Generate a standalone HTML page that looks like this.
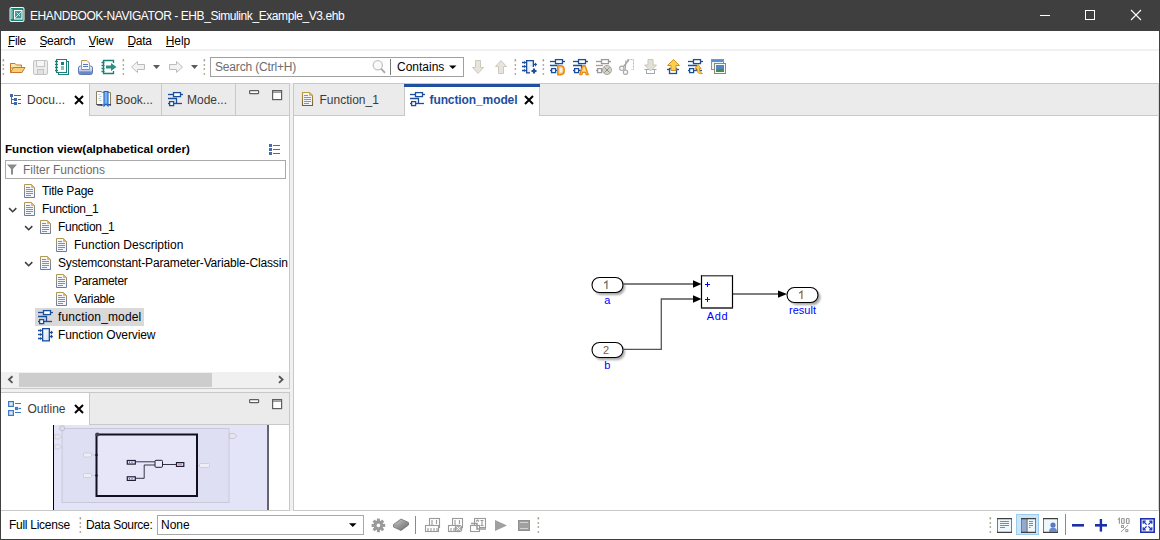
<!DOCTYPE html>
<html><head><meta charset="utf-8">
<style>
*{margin:0;padding:0;box-sizing:border-box}
html,body{width:1160px;height:540px;overflow:hidden;background:#fff}
body{position:relative;font-family:"Liberation Sans",sans-serif;font-size:12px;color:#000}
.a{position:absolute}
.t{position:absolute;white-space:nowrap;line-height:1}
svg{position:absolute;overflow:visible}
</style></head><body>

<!-- window frame -->
<div class="a" style="left:0;top:0;width:1160px;height:540px;background:#f0f0f0"></div>

<!-- title bar -->
<div class="a" style="left:0;top:0;width:1160px;height:31px;background:#3f3f3f"></div>
<div class="t" style="left:30px;top:10px;font-size:12px;color:#fff;letter-spacing:-0.42px">EHANDBOOK-NAVIGATOR - EHB_Simulink_Example_V3.ehb</div>

<!-- menu bar -->
<div class="a" style="left:1px;top:31px;width:1158px;height:18px;background:#fff"></div>
<div class="a" style="left:1px;top:49px;width:1158px;height:2px;background:#f0f0f0"></div>
<!-- toolbar -->
<div class="a" style="left:1px;top:51px;width:1158px;height:32px;background:#fff"></div>


<!-- menu texts -->
<div class="t" style="left:8px;top:35px;letter-spacing:-0.4px">File</div>
<div class="t" style="left:39.5px;top:35px;letter-spacing:-0.4px">Search</div>
<div class="t" style="left:88.5px;top:35px;letter-spacing:-0.3px">View</div>
<div class="t" style="left:127.5px;top:35px;letter-spacing:-0.3px">Data</div>
<div class="t" style="left:165.8px;top:35px;letter-spacing:-0.1px">Help</div>
<div class="a" style="left:8px;top:46px;width:6px;height:1px;background:#000"></div>
<div class="a" style="left:40px;top:46px;width:6px;height:1px;background:#000"></div>
<div class="a" style="left:89px;top:46px;width:6px;height:1px;background:#000"></div>
<div class="a" style="left:128px;top:46px;width:6px;height:1px;background:#000"></div>
<div class="a" style="left:166px;top:46px;width:8px;height:1px;background:#000"></div>

<!-- search box -->
<div class="a" style="left:210px;top:57px;width:254px;height:20px;border:1px solid #a0a0a0;background:#fff"></div>
<div class="t" style="left:215px;top:60.5px;color:#6d6d6d;letter-spacing:-0.17px">Search (Ctrl+H)</div>
<div class="a" style="left:390px;top:59px;width:1px;height:16px;background:#7a7a7a"></div>
<div class="t" style="left:397px;top:60.5px;color:#000">Contains</div>

<!-- ===== left top panel ===== -->
<div class="a" style="left:1px;top:83px;width:289px;height:306px;background:#fff;border:1px solid #c8c8c8;border-left:none"></div>
<div class="a" style="left:1px;top:84px;width:288px;height:32px;background:#ebebeb;border-bottom:1px solid #c8c8c8"></div>
<div class="a" style="left:1px;top:84px;width:89px;height:32px;background:#fff;border-right:1px solid #c8c8c8"></div>
<div class="a" style="left:161px;top:84px;width:1px;height:31px;background:#c8c8c8"></div>
<div class="a" style="left:235px;top:84px;width:1px;height:31px;background:#c8c8c8"></div>
<div class="t" style="left:27px;top:93.6px;font-size:12px;color:#3a3a3a">Docu...</div>
<div class="t" style="left:115.5px;top:93.6px;font-size:12px;color:#3a3a3a">Book...</div>
<div class="t" style="left:187px;top:93.6px;font-size:12px;color:#3a3a3a">Mode...</div>

<div class="t" style="left:5px;top:143px;font-weight:bold;font-size:11.6px">Function view(alphabetical order)</div>
<div class="a" style="left:5px;top:160px;width:281px;height:19px;border:1px solid #a9a9a9;background:#fff"></div>
<div class="t" style="left:23px;top:163.5px;color:#6d6d6d">Filter Functions</div>

<div class="t" style="left:42px;top:184.5px;letter-spacing:-0.2px">Title Page</div>
<div class="t" style="left:42px;top:202.5px;letter-spacing:-0.3px">Function_1</div>
<div class="t" style="left:58px;top:220.5px;letter-spacing:-0.3px">Function_1</div>
<div class="t" style="left:74px;top:238.5px">Function Description</div>
<div class="a" style="left:58px;top:253px;width:230px;height:18px;overflow:hidden"><div class="t" style="left:0;top:3.5px;letter-spacing:-0.15px">Systemconstant-Parameter-Variable-Classing</div></div>
<div class="t" style="left:74px;top:274.5px;letter-spacing:-0.28px">Parameter</div>
<div class="t" style="left:74px;top:292.5px;letter-spacing:-0.33px">Variable</div>
<div class="a" style="left:35px;top:308px;width:109px;height:18px;background:#d9d9d9"></div>
<div class="t" style="left:58px;top:310.5px;letter-spacing:0.14px">function_model</div>
<div class="t" style="left:58px;top:328.5px;letter-spacing:-0.12px">Function Overview</div>

<!-- h scrollbar -->
<div class="a" style="left:1px;top:372px;width:288px;height:16px;background:#f0f0f0"></div>
<div class="a" style="left:19px;top:373px;width:193px;height:14px;background:#cdcdcd"></div>

<!-- ===== outline panel ===== -->
<div class="a" style="left:1px;top:392px;width:289px;height:119px;background:#fff;border:1px solid #c8c8c8;border-left:none;border-bottom:none"></div>
<div class="a" style="left:1px;top:393px;width:288px;height:32px;background:#ebebeb;border-bottom:1px solid #c8c8c8"></div>
<div class="a" style="left:1px;top:393px;width:89px;height:32px;background:#fff;border-right:1px solid #c8c8c8"></div>
<div class="t" style="left:27.5px;top:402.8px;font-size:12px;color:#3a3a3a">Outline</div>

<!-- ===== editor ===== -->
<div class="a" style="left:293px;top:83px;width:866px;height:428px;background:#fff;border:1px solid #c8c8c8;border-right:1px solid #d8d8d8"></div>
<div class="a" style="left:294px;top:84px;width:864px;height:32px;background:#ebebeb;border-bottom:1px solid #c8c8c8"></div>
<div class="a" style="left:404px;top:84px;width:136px;height:32px;background:#fff;border-left:1px solid #c8c8c8;border-right:1px solid #c8c8c8"></div>
<div class="a" style="left:404px;top:84px;width:136px;height:3px;background:#1f50a0"></div>
<div class="t" style="left:319.5px;top:93.6px;font-size:12px;color:#3a3a3a">Function_1</div>
<div class="t" style="left:429.5px;top:93.6px;font-size:12px;font-weight:bold;letter-spacing:-0.1px;color:#1c4e9e">function_model</div>

<!-- ===== status bar ===== -->
<div class="a" style="left:1px;top:511px;width:1158px;height:28px;background:#fff"></div>
<div class="t" style="left:9px;top:518.5px;color:#000;letter-spacing:-0.27px">Full License</div>
<div class="t" style="left:86px;top:518.5px;color:#000;letter-spacing:-0.3px">Data Source:</div>
<div class="a" style="left:157px;top:515px;width:207px;height:20px;border:1px solid #a9a9a9;background:#fff"></div>
<div class="t" style="left:161px;top:518.5px;color:#000">None</div>


<!-- ===== ICON OVERLAY ===== -->
<svg width="1160" height="540" style="left:0;top:0" viewBox="0 0 1160 540">
<defs>
 <linearGradient id="docg" x1="0" y1="0" x2="0" y2="1"><stop offset="0" stop-color="#b09a58"/><stop offset="1" stop-color="#6a7aa8"/></linearGradient>
 <linearGradient id="docg2" x1="0" y1="0" x2="0" y2="1"><stop offset="0" stop-color="#c09a40"/><stop offset="1" stop-color="#6a6040"/></linearGradient>
 <g id="doc">
  <path d="M0.5 0.5 H7.5 L10.5 3.5 V13.5 H0.5 Z" fill="#f2f6fc" stroke="url(#docg)" stroke-width="1"/>
  <path d="M7.5 0.5 L10.5 3.5 H7.5 Z" fill="#e2b458" stroke="#d0a040" stroke-width="0.6"/>
  <g fill="#7890c4"><rect x="2" y="3" width="4" height="1"/><rect x="2" y="5" width="7" height="1"/><rect x="2" y="7" width="7" height="1"/><rect x="2" y="9" width="7" height="1"/><rect x="2" y="11" width="5" height="1"/></g>
 </g>
 <g id="model">
  <g stroke="#1a4f9c" stroke-width="1.3" fill="none">
   <path d="M0 2.5 H15"/>
   <rect x="5.5" y="0.6" width="7" height="4" fill="#fff"/>
   <path d="M0 6.5 H8.5 V11.5"/>
   <path d="M0 11.5 H14"/>
   <rect x="1.6" y="9.6" width="4" height="4" fill="#fff"/>
  </g>
 </g>
 <g id="chev"><path d="M0.6 0.6 L4.2 4.2 L7.8 0.6" fill="none" stroke="#3c3c3c" stroke-width="1.5"/></g>
 <g id="xc"><path d="M1 1 L9 9 M9 1 L1 9" stroke="#000" stroke-width="2" fill="none"/></g>
 <g id="grip" fill="#a39b8b"><rect x="0.6" y="0.2" width="1.5" height="2.2"/><rect x="0.6" y="5.2" width="1.5" height="1.6"/><rect x="0.6" y="9.2" width="1.5" height="1.6"/><rect x="0.6" y="14.2" width="1.5" height="1.6"/></g>
 <g id="minbtn"><rect x="0.6" y="0.6" width="9" height="3" rx="0.6" fill="#fff" stroke="#5e5e5e" stroke-width="1.2"/></g>
 <g id="maxbtn"><rect x="0.6" y="0.6" width="9" height="9" fill="#fff" stroke="#5e5e5e" stroke-width="1.2"/><rect x="0.6" y="1.6" width="9" height="1" fill="#5e5e5e"/></g>
 <g id="fmodel">
  <linearGradient id="fmg" x1="0" y1="0" x2="1" y2="1"><stop offset="0" stop-color="#ffffff"/><stop offset="1" stop-color="#d4e2f0"/></linearGradient>
  <rect x="4.65" y="0.65" width="6.7" height="12.2" fill="url(#fmg)" stroke="#1a4f9c" stroke-width="1.3"/>
  <g stroke="#1a4f9c" stroke-width="1.3" fill="none">
   <path d="M0 2.5 H3 M0 6.5 H3 M0 10.5 H3 M11.3 4.5 H13.5 M11.3 8.5 H13.5"/>
  </g>
  <g fill="#1a4f9c"><path d="M2.3 0.8 L4.3 2.5 L2.3 4.2Z M2.3 4.8 L4.3 6.5 L2.3 8.2Z M2.3 8.8 L4.3 10.5 L2.3 12.2Z M13 2.6 L15.2 4.5 L13 6.4Z M13 6.6 L15.2 8.5 L13 10.4Z"/></g>
 </g>
</defs>

<!-- title icon -->
<g>
 <rect x="9.5" y="7" width="15" height="15" rx="2" fill="#f4fbfa"/>
 <rect x="10.5" y="8" width="13" height="13" rx="1.2" fill="#17847a"/>
 <g fill="#e8f6f4"><rect x="10.5" y="9.5" width="2.2" height="1"/><rect x="10.5" y="11.5" width="2.2" height="1"/><rect x="10.5" y="13.5" width="2.2" height="1"/><rect x="10.5" y="15.5" width="2.2" height="1"/><rect x="10.5" y="17.5" width="2.2" height="1"/></g>
 <rect x="14.5" y="10.5" width="7.5" height="8.5" fill="#3a9a90" stroke="#fff" stroke-width="1.1"/>
 <path d="M15 18 L21.5 11.5 M16.5 12.5 L20 16" stroke="#d8f0ec" stroke-width="0.9"/>
</g>
<!-- window controls -->
<rect x="1040" y="15" width="10" height="1" fill="#fff"/>
<rect x="1085.5" y="10.5" width="9" height="9" fill="none" stroke="#fff" stroke-width="1"/>
<path d="M1131 10 L1141 20 M1141 10 L1131 20" stroke="#fff" stroke-width="1.1"/>

<!-- toolbar grips -->
<use href="#grip" x="2" y="59"/>
<use href="#grip" x="122" y="59"/>
<use href="#grip" x="203" y="59"/>
<use href="#grip" x="514" y="59"/>
<use href="#grip" x="542" y="59"/>

<!-- open folder -->
<g transform="translate(10,62)">
 <path d="M0.5 1.5 H5 L6.5 3 H11.5 V6 H0.5 Z" fill="#fbe7a8" stroke="#c47a2c" stroke-width="1"/>
 <path d="M0.5 10.5 L3.5 5.5 H15 L12 10.5 Z" fill="#f7cf78" stroke="#c47a2c" stroke-width="1"/>
 <path d="M0.5 1.5 V10.5" stroke="#c47a2c" stroke-width="1"/>
</g>
<!-- save (disabled) -->
<g transform="translate(33,60)">
 <rect x="0.5" y="0.5" width="14" height="14" rx="1.5" fill="#ececec" stroke="#c4c4c4"/>
 <rect x="3.5" y="0.5" width="8" height="6" fill="#f6f6f6" stroke="#c4c4c4"/>
 <rect x="4.5" y="9.5" width="6" height="5" fill="#e0e0e0" stroke="#c4c4c4"/>
</g>
<!-- notebook -->
<g transform="translate(55,59)">
 <rect x="3.5" y="2.5" width="10" height="13" fill="#fff" stroke="#1a7f76"/>
 <rect x="1.5" y="0.5" width="10" height="13" fill="#fff" stroke="#1a7f76"/>
 <path d="M0 2.5 h3 M0 5.5 h3 M0 8.5 h3 M0 11.5 h3" stroke="#1a7f76" stroke-width="1.4"/>
 <rect x="6" y="3" width="3" height="3" fill="#1a7f76"/>
 <path d="M6 8 h3 M6 10 h3" stroke="#1a7f76"/>
</g>
<!-- print -->
<g transform="translate(78,60)">
 <defs><linearGradient id="prg" x1="0" y1="0" x2="0" y2="1"><stop offset="0" stop-color="#f4f6fc"/><stop offset="0.45" stop-color="#c8d4ee"/><stop offset="1" stop-color="#6c8ac8"/></linearGradient></defs>
 <path d="M0.5 8 Q0.5 6 2.5 6 H12.5 Q14.5 6 14.5 8 V12.5 Q14.5 14.5 12.5 14.5 H2.5 Q0.5 14.5 0.5 12.5Z" fill="url(#prg)" stroke="#5a78b8"/>
 <path d="M3.5 0.5 H9 L11.5 3 V9.5 H3.5 Z" fill="#f4f6fb" stroke="#b89a50"/>
 <path d="M5 4.5 h5 M5 6.5 h5" stroke="#5a78b8"/>
 <path d="M3.5 9.5 H11.5" stroke="#8090b0"/>
 <rect x="1.2" y="11.5" width="12.6" height="2.5" fill="#6a88c4"/>
</g>
<!-- export -->
<g transform="translate(101,59)">
 <path d="M12.5 4 V1.5 H2.5 V14.5 H12.5 V12" fill="#fff" stroke="#1a7f76" stroke-width="1.3"/>
 <path d="M0.5 3.5 h3 M0.5 6.5 h3 M0.5 9.5 h3 M0.5 12.5 h3" stroke="#1a7f76" stroke-width="1.3"/>
 <path d="M5 6.5 H10 V4 L15.5 8 L10 12 V9.5 H5 Z" fill="#2a9088"/>
</g>
<!-- back / fwd -->
<g transform="translate(131,61)">
 <path d="M0.5 6 L6.5 0.5 V3.5 H13.5 V8.5 H6.5 V11.5 Z" fill="#f2f2f2" stroke="#bcbcbc" stroke-linejoin="round"/>
</g>
<path d="M153 65 H160 L156.5 69 Z" fill="#5a5a5a"/>
<g transform="translate(169,61)">
 <path d="M13.5 6 L7.5 0.5 V3.5 H0.5 V8.5 H7.5 V11.5 Z" fill="#f2f2f2" stroke="#bcbcbc" stroke-linejoin="round"/>
</g>
<path d="M191 65 H198 L194.5 69 Z" fill="#5a5a5a"/>

<!-- magnifier -->
<circle cx="377.8" cy="65.3" r="4.6" fill="#fafafa" stroke="#c4c4c4" stroke-width="1.3"/>
<path d="M381 68.6 L385 72.8" stroke="#a8a8a8" stroke-width="1.8"/>
<path d="M449 65.5 H456.5 L452.75 69 Z" fill="#000"/>

<!-- down / up disabled arrows -->
<g transform="translate(472,60)">
 <path d="M3.5 0.5 H8.5 V7.5 H11.5 L6 13.5 L0.5 7.5 H3.5 Z" fill="#e6e4dc" stroke="#cdc9bc" stroke-linejoin="round"/>
</g>
<g transform="translate(495,60)">
 <path d="M3.5 13.5 H8.5 V6.5 H11.5 L6 0.5 L0.5 6.5 H3.5 Z" fill="#e6e4dc" stroke="#cdc9bc" stroke-linejoin="round"/>
</g>
<!-- function icon toolbar -->
<g transform="translate(522,60)">
 <use href="#fmodel"/>
 <rect x="8" y="7" width="8" height="8" fill="#fff"/>
 <path d="M9.5 11 H14.5 M12 8.5 V13.5" stroke="#1a4f9c" stroke-width="2.2"/>
</g>
<!-- model D -->
<g transform="translate(550,59)">
 <use href="#model"/>
 <path d="M7.8 6.8 H10.5 Q14.2 6.8 14.2 11.2 Q14.2 15.6 10.5 15.6 H7.8 Z" fill="#fcd088" stroke="#ec8a10" stroke-width="1.6"/>
 <path d="M9.8 8.8 H10.5 Q12.2 8.8 12.2 11.2 Q12.2 13.6 10.5 13.6 H9.8 Z" fill="#eef2fa"/>
</g>
<!-- model A -->
<g transform="translate(573,59)">
 <use href="#model"/>
 <path d="M6.8 15.6 L9.9 6.8 H12.1 L15.2 15.6 H13.2 L12.5 13.4 H9.5 L8.8 15.6 Z" fill="#fcd088" stroke="#ec8a10" stroke-width="1.4" stroke-linejoin="round"/>
 <path d="M10.2 11.6 H11.8 L11 9.2 Z" fill="#fff4d8"/>
</g>
<!-- model X gray -->
<g transform="translate(596,59)">
 <g stroke="#9a9a9a" stroke-width="1.3" fill="none">
  <path d="M0 2.5 H15"/><rect x="5.5" y="0.6" width="7" height="4" fill="#fff"/>
  <path d="M0 11.5 H8"/><rect x="1.6" y="9.6" width="4" height="4" fill="#fff"/>
 </g>
 <path d="M0 6.5 H7" stroke="#c49090" stroke-width="1.3"/>
 <circle cx="11" cy="11" r="4.5" fill="#d6d2c4" stroke="#a8a8a8"/>
 <path d="M8.5 8.5 L13.5 13.5 M13.5 8.5 L8.5 13.5" stroke="#909090" stroke-width="1"/>
</g>
<!-- scissors gray -->
<g transform="translate(619,59)" fill="none">
 <path d="M8.5 0.5 H14.5 V10.5 H12 M8.5 0.5 V3" stroke="#b8b8b8" stroke-width="1" stroke-dasharray="2 1"/>
 <path d="M4 8 L10 1 M6 12 L7 1.5" stroke="#a4a4a4" stroke-width="1.2"/>
 <circle cx="2.8" cy="9.3" r="2.2" fill="#f6f6f6" stroke="#a8a8a8" stroke-width="1.1"/>
 <circle cx="6.5" cy="13.2" r="2.2" fill="#f6f6f6" stroke="#a8a8a8" stroke-width="1.1"/>
</g>
<!-- gray down arrow in box -->
<g transform="translate(644,59)">
 <path d="M0.5 10.5 H12.5" stroke="#a0a8b8"/>
 <rect x="2.5" y="10.5" width="8" height="4" fill="#fff" stroke="#a0a8b8"/>
 <path d="M4 0.5 H9 V6 H12.5 L6.5 12 L0.5 6 H4 Z" fill="#e2e0d8" stroke="#cac6b8" stroke-linejoin="round"/>
</g>
<!-- yellow up arrow -->
<g transform="translate(667,59)">
 <path d="M0 10.5 H12" stroke="#1a4f9c" stroke-width="1.3"/>
 <rect x="2.5" y="9.5" width="7" height="5" fill="#fff" stroke="#1a4f9c" stroke-width="1.3"/>
 <path d="M4 11.5 V6.5 H0.5 L6.5 0.5 L12.5 6.5 H9 V11.5 Z" fill="#fcd04a" stroke="#d89018" stroke-linejoin="round"/>
</g>
<!-- model + yellow return arrow -->
<g transform="translate(688,59)">
 <use href="#model"/>
 <path d="M7 9.5 L10 5.5 L13 9.5 H11.5 V11 Q11.5 13 14.5 14.5 Q9.5 15.5 9 11 V9.5 Z" fill="#fcd04a" stroke="#d89018" stroke-width="0.9" stroke-linejoin="round"/>
</g>
<!-- window image icon -->
<g transform="translate(711,59)">
 <rect x="0.5" y="0.5" width="12" height="10" fill="#eef4fc" stroke="#a89060"/>
 <rect x="1" y="1" width="11" height="2" fill="#5a90d0"/>
 <rect x="3.5" y="4.5" width="11" height="10" fill="#f8f8f8" stroke="#8a8a70"/>
 <rect x="5" y="6" width="8" height="7" fill="#5088c0"/>
 <path d="M5 11 Q8 9 13 10 V13 H5 Z" fill="#4a8a50"/>
</g>

<!-- ===== left panel tab icons ===== -->
<g fill="#4068a8">
 <rect x="10" y="94" width="3" height="3"/><rect x="14" y="95" width="7" height="1"/>
 <rect x="11" y="97" width="1" height="7"/>
 <rect x="12" y="99" width="2" height="1"/><rect x="14" y="98" width="3" height="3"/><rect x="18" y="99" width="3" height="1"/>
 <rect x="12" y="103" width="2" height="1"/><rect x="14" y="102" width="3" height="3"/><rect x="18" y="103" width="3" height="1"/>
</g>
<use href="#xc" x="74" y="95"/>
<!-- book icon -->
<g transform="translate(96,91)">
 <path d="M0.5 0.5 H5 L6.5 1.5 H14.5 V13.5 H8 L6 14.5 H1.5 L0.5 13.5 Z" fill="#fafcff" stroke="#8a8060"/>
 <path d="M0.5 13.5 H6 L6 14.5 M9 13.5 H14.5 V14.5" stroke="#404860" stroke-width="1.2"/>
 <path d="M2.5 3.5 h2 M3.5 5.5 h2 M2.5 7.5 h2 M3.5 9.5 h2" stroke="#b0c0d0"/>
 <path d="M7.5 0.5 H12 V15 L10 13 L8 15 V0.5 Z" fill="#78b4f4" stroke="#1a64c8" stroke-width="1.1"/>
</g>
<use href="#model" x="168" y="92"/>
<use href="#minbtn" x="249" y="90"/>
<use href="#maxbtn" x="272" y="90"/>

<!-- editor tab icons -->
<g transform="translate(302,92)">
 <path d="M0.5 0.5 H7.5 L10.5 3.5 V13.5 H0.5 Z" fill="#f2f6fc" stroke="url(#docg2)" stroke-width="1.1"/>
 <path d="M7.5 0.5 L10.5 3.5 H7.5 Z" fill="#e2b458" stroke="#d0a040" stroke-width="0.6"/>
 <g fill="#7d92c0"><rect x="2" y="3" width="4" height="1"/><rect x="2" y="5" width="7" height="1"/><rect x="2" y="7" width="7" height="1"/><rect x="2" y="9" width="7" height="1"/><rect x="2" y="11" width="5" height="1"/></g>
</g>
<use href="#model" x="410" y="92"/>
<use href="#xc" x="524" y="95"/>

<!-- tree header list icon -->
<g fill="#4a6aa8">
 <rect x="269" y="144" width="3" height="3"/><rect x="273" y="145" width="7" height="1"/>
 <rect x="269" y="148" width="3" height="3"/><rect x="273" y="149" width="7" height="1"/>
 <rect x="269" y="152" width="3" height="3"/><rect x="273" y="153" width="7" height="1"/>
</g>
<!-- funnel -->
<path d="M7 164.5 H17 L13 169 V174.5 H11 V169 Z" fill="#8a8a8a"/>

<!-- tree icons -->
<use href="#doc" x="24" y="184"/>
<use href="#chev" x="8.5" y="207.5"/>
<use href="#doc" x="24" y="202"/>
<use href="#chev" x="24.5" y="225.5"/>
<use href="#doc" x="40" y="220"/>
<use href="#doc" x="56" y="238"/>
<use href="#chev" x="24.5" y="261.5"/>
<use href="#doc" x="40" y="256"/>
<use href="#doc" x="56" y="274"/>
<use href="#doc" x="56" y="292"/>
<use href="#model" x="38" y="310"/>
<use href="#fmodel" x="38" y="328"/>

<!-- scroll arrows -->
<path d="M12.5 376.3 L9 379.6 L12.5 382.9" fill="none" stroke="#555" stroke-width="1.9"/>
<path d="M279 376.3 L282.5 379.6 L279 382.9" fill="none" stroke="#555" stroke-width="1.9"/>

<!-- outline tab -->
<g fill="none" stroke="#3c78c8" stroke-width="1.2">
 <rect x="8.6" y="401.6" width="4.8" height="4.8" fill="#d8e8f8"/>
 <rect x="8.6" y="410.6" width="4.8" height="4.8" fill="#d8e8f8"/>
 <path d="M15 403.5 H21 M15 412.5 H21"/>
 <rect x="15.5" y="407.5" width="2" height="2"/>
 <path d="M18.5 408.5 H21"/>
</g>
<use href="#xc" x="74" y="404"/>
<use href="#minbtn" x="249" y="399"/>
<use href="#maxbtn" x="272" y="399"/>

</svg>

<!-- ===== DIAGRAM ===== -->
<svg width="1160" height="540" style="left:0;top:0" viewBox="0 0 1160 540">
<defs>
 <filter id="shd" x="-30%" y="-30%" width="160%" height="180%"><feGaussianBlur stdDeviation="1.2"/></filter>
 <g id="pill"><rect x="0.5" y="0.5" width="31" height="15" rx="7.5" ry="7.5" fill="#fff" stroke="#000" stroke-width="1.1"/></g>
</defs>
<!-- inport 1 -->
<rect x="594" y="280" width="31" height="15" rx="7.5" fill="#000" opacity="0.35" filter="url(#shd)"/>
<use href="#pill" x="591.5" y="277"/>
<path d="M604.2 283.3 L606.9 281.3 V289" fill="none" stroke="#7a6448" stroke-width="1.2"/>
<text x="607.2" y="303.8" font-family="Liberation Sans" font-size="11" fill="#0000ff" text-anchor="middle">a</text>
<!-- inport 2 -->
<rect x="594" y="345" width="31" height="15" rx="7.5" fill="#000" opacity="0.35" filter="url(#shd)"/>
<use href="#pill" x="591.5" y="342"/>
<text x="606" y="354" font-family="Liberation Sans" font-size="11" fill="#7a6040" text-anchor="middle">2</text>
<text x="607.2" y="369" font-family="Liberation Sans" font-size="11" fill="#0000ff" text-anchor="middle">b</text>
<!-- outport -->
<rect x="789.5" y="290" width="31" height="15" rx="7.5" fill="#000" opacity="0.35" filter="url(#shd)"/>
<use href="#pill" x="786.5" y="287"/>
<path d="M799.2 293.3 L801.9 291.3 V299" fill="none" stroke="#7a6448" stroke-width="1.2"/>
<text x="802.5" y="314" font-family="Liberation Sans" font-size="11" fill="#0000ff" text-anchor="middle">result</text>
<!-- lines -->
<g stroke="#555" stroke-width="1.3" fill="none">
 <path d="M623 284 H694"/>
 <path d="M623 349.3 H661.3 V299 H694"/>
 <path d="M733 294 H779"/>
</g>
<path d="M693 280.2 L701.5 284 L693 287.8 Z" fill="#000"/>
<path d="M693 295.2 L701.5 299 L693 302.8 Z" fill="#000"/>
<path d="M778 290.4 L787 294 L778 297.8 Z" fill="#000"/>
<!-- add block -->
<rect x="701.5" y="275.6" width="31" height="32.4" fill="#fff" stroke="#000" stroke-width="1.2"/>
<path d="M701.5 275.6 H732.5 M701.5 308 H732.5" stroke="#555" stroke-width="1.3"/>
<path d="M705 284.5 H710 M707.5 282 V287 M705 299.5 H710 M707.5 297 V302" stroke="#0000ff" stroke-width="1"/>
<text x="717.5" y="320" font-family="Liberation Sans" font-size="11" fill="#0000ff" text-anchor="middle" letter-spacing="0.6">Add</text>
</svg>

<!-- ===== OUTLINE THUMB ===== -->
<svg width="1160" height="540" style="left:0;top:0" viewBox="0 0 1160 540">
<rect x="53" y="425" width="214" height="85" fill="#e4e4f8"/>
<rect x="53" y="425" width="1" height="85" fill="#000"/>
<rect x="267" y="425" width="2" height="85" fill="#64646e"/>
<rect x="1" y="510" width="289" height="1" fill="#c8c8c8"/>
<!-- outer subsystem rect -->
<rect x="62" y="428.5" width="167" height="74" fill="#dfdff4" stroke="#c8c8d8" stroke-width="1"/>
<circle cx="62.2" cy="428.3" r="2.6" fill="#dcdcec" stroke="#b8b8c8" stroke-width="0.8"/>
<path d="M55 434.5 H59 L61.5 436.8 L59 439 H55 Z M55 444.5 H59 L61.5 446.8 L59 449 H55 Z" fill="#e8e4ec" stroke="#c8c8d8" stroke-width="0.8"/>
<path d="M229.5 433.5 H234 L237 436 L234 438.5 H229.5 Z" fill="#e8e4ec" stroke="#c0c0d0" stroke-width="0.8"/>
<rect x="83.5" y="453" width="8" height="4" rx="1" fill="#eeeef8" stroke="#c8c8d8" stroke-width="0.8"/>
<rect x="83.5" y="473.5" width="8" height="4" rx="1" fill="#eeeef8" stroke="#c8c8d8" stroke-width="0.8"/>
<rect x="199.5" y="463.5" width="10" height="4" rx="1" fill="#eeeef8" stroke="#c8c8d8" stroke-width="0.8"/>
<path d="M91.5 455 H96 M91.5 475.5 H96 M197 465.5 H199.5" stroke="#c8c8d8" stroke-width="0.8"/>
<!-- inner black rect -->
<rect x="96.5" y="434.5" width="100.5" height="61.5" fill="#e6e6f8" stroke="#101020" stroke-width="2"/>
<circle cx="97.4" cy="434.4" r="2" fill="#404050"/>
<circle cx="96.5" cy="455" r="1.2" fill="#101020"/>
<circle cx="96.5" cy="475.5" r="1.2" fill="#101020"/>
<!-- mini diagram -->
<g stroke="#202030" fill="none">
 <rect x="127.3" y="460.5" width="8" height="3.6" stroke-width="1.2" fill="#e8e8f8"/>
 <rect x="127.3" y="476.8" width="8" height="3.6" stroke-width="1.2" fill="#e8e8f8"/>
 <rect x="155" y="460.3" width="7.5" height="7" rx="1" stroke-width="1" fill="#eaeaf8"/>
 <rect x="176.5" y="462.6" width="7.3" height="3.8" stroke-width="1.2" fill="#e8e8f8"/>
 <path d="M135.5 461.8 H155 M135.5 478.3 H144.2 V465 H155 M162.5 464.5 H176.5" stroke-width="0.9"/>
</g>
<g fill="#e04040"><rect x="129" y="461.5" width="1" height="1.5"/><rect x="129" y="478" width="1" height="1.5"/><rect x="178.5" y="463.5" width="1" height="1.5"/></g>
<g fill="#4060e0"><rect x="131.5" y="461.5" width="1" height="1.5"/><rect x="131.5" y="478" width="1" height="1.5"/><rect x="180.5" y="463.5" width="1" height="1.5"/></g>
</svg>

<!-- ===== STATUS ICONS ===== -->
<svg width="1160" height="540" style="left:0;top:0" viewBox="0 0 1160 540">
<use href="#grip" x="79" y="517"/>
<path d="M349 523.2 H356.5 L352.75 527 Z" fill="#000"/>
<!-- gear -->
<g transform="translate(378.4,525.4)">
 <g fill="#9a9a9a">
  <circle r="4.8"/>
  <rect x="-1.5" y="-6.8" width="3" height="13.6"/>
  <rect x="-1.5" y="-6.8" width="3" height="13.6" transform="rotate(45)"/>
  <rect x="-1.5" y="-6.8" width="3" height="13.6" transform="rotate(90)"/>
  <rect x="-1.5" y="-6.8" width="3" height="13.6" transform="rotate(135)"/>
 </g>
 <circle r="1.8" fill="#fff"/>
</g>
<!-- disk -->
<g transform="translate(393,518.5)">
 <defs><linearGradient id="dg" x1="0" y1="0" x2="1" y2="1"><stop offset="0" stop-color="#d0d0d0"/><stop offset="1" stop-color="#606060"/></linearGradient></defs>
 <path d="M0.5 6 L8 0.5 L15.5 4 V6.5 L8 12 L0.5 8.5 Z" fill="url(#dg)" stroke="#707070" stroke-width="0.8"/>
 <path d="M0.5 6 L8 9.5 L15.5 4" fill="none" stroke="#909090" stroke-width="0.8"/>
</g>
<rect x="415" y="516" width="1" height="18" fill="#8a8a8a"/>
<!-- calib icons gray -->
<g stroke="#9a9a9a" fill="#fff" stroke-width="1.1">
 <rect x="429.5" y="518.5" width="10" height="9"/>
 <rect x="425.5" y="525.5" width="13" height="6"/>
 <path d="M428 531 V528 M431 531 V528 M434 531 V528 M437 531 V528 M432 520 V526 M436.5 520 V524" fill="none"/>
</g>
<g stroke="#9a9a9a" fill="#fff" stroke-width="1.1">
 <rect x="452.5" y="518.5" width="10" height="9"/>
 <rect x="448.5" y="525.5" width="9" height="6"/>
 <path d="M451 531 V528 M454 531 V528 M455 520 V526 M459.5 520 V524" fill="none"/>
 <circle cx="458.5" cy="528.5" r="3.3" fill="#b0b0b0" stroke="#9a9a9a"/>
 <path d="M456.5 526.5 L460.5 530.5 M460.5 526.5 L456.5 530.5" stroke="#fff" stroke-width="0.9"/>
</g>
<g stroke="#9a9a9a" fill="#fff" stroke-width="1.1">
 <rect x="474.5" y="518.5" width="11" height="9"/>
 <rect x="470.5" y="525.5" width="9" height="6"/>
 <path d="M471 523.5 H477 V529 H486" fill="none" stroke-width="1.5"/>
 <path d="M482 520 V526 M480.5 520.5 H483.5 M480.5 525.5 H483.5 M476 521.5 L477.5 520 L479 521.5" fill="none"/>
</g>
<path d="M495 520 L507 525.5 L495 531 Z" fill="#a0a0a0"/>
<rect x="518.5" y="520.5" width="11" height="10" fill="#a0a0a0" stroke="#909090"/>
<path d="M520 522.5 H528 M520 528.5 H528" stroke="#d8d8d8" stroke-width="0.9"/>
<use href="#grip" x="537" y="517"/>

<!-- right group -->
<use href="#grip" x="989" y="517"/>
<g transform="translate(997,518)">
 <rect x="0.5" y="0.5" width="14" height="14" fill="#eef8fc" stroke="#9a7a30"/>
 <path d="M0 0.6 H15 M0 14.4 H15" stroke="#404040" stroke-width="1.2"/>
 <path d="M3 3.5 H12 M3 5.5 H12 M3 7.5 H12 M3 9.5 H8" stroke="#6f8ac2"/>
</g>
<rect x="1016.5" y="514.5" width="22" height="20" fill="#cce4f7" stroke="#99ccf0"/>
<g transform="translate(1021,518)">
 <rect x="0.5" y="0.5" width="14" height="14" fill="#eef8fc" stroke="#9a7a30"/>
 <rect x="1" y="1" width="4.5" height="13" fill="#8eaad6"/>
 <path d="M6 0.5 V14.5" stroke="#5a5040"/>
 <path d="M0 0.6 H15 M0 14.4 H15" stroke="#404040" stroke-width="1.2"/>
 <path d="M8 3.5 H12 M8 5.5 H12 M8 7.5 H12 M8 9.5 H9.5" stroke="#6f8ac2"/>
</g>
<g transform="translate(1043,518)">
 <rect x="0.5" y="0.5" width="14" height="14" fill="#eef8fc" stroke="#9a7a30"/>
 <path d="M0 0.6 H15 M0 14.4 H15" stroke="#404040" stroke-width="1.2"/>
 <circle cx="10" cy="7" r="2.6" fill="#5878c8"/>
 <path d="M6 14 Q6 9.5 10 9.5 Q14 9.5 14 14 Z" fill="#6a88cc"/>
</g>
<rect x="1065" y="514" width="1" height="21" fill="#8a8a8a"/>
<rect x="1072" y="524" width="12" height="2.6" fill="#1c30a8"/>
<rect x="1095" y="524" width="12" height="2.6" fill="#1c30a8"/>
<rect x="1099.7" y="519" width="2.4" height="12.6" fill="#1c30a8"/>
<g fill="none" stroke="#9a9a9a" stroke-width="1.2">
 <path d="M1118 519.6 L1119.4 518.4 V523.8"/>
 <rect x="1121.6" y="518.5" width="2.6" height="5" rx="0.8"/>
 <rect x="1126.5" y="518.5" width="2.6" height="5" rx="0.8"/>
 <rect x="1121.5" y="525.5" width="2" height="2" stroke-width="1"/>
 <rect x="1125.8" y="529.6" width="2" height="2" stroke-width="1"/>
 <path d="M1128 525.2 L1121 532" stroke-width="1"/>
</g>
<g transform="translate(1140,518)">
 <rect x="0.8" y="0.8" width="13.4" height="13.4" fill="#fbfcfe" stroke="#1c30b4" stroke-width="1.6"/>
 <g stroke="#1c30b4" stroke-width="1.25" fill="none">
  <path d="M3.4 3.4 L6.6 6.6 M11.6 3.4 L8.4 6.6 M3.4 11.6 L6.6 8.4 M11.6 11.6 L8.4 8.4"/>
  <path d="M3.2 5.8 V3.2 H5.8 M9.2 3.2 H11.8 V5.8 M3.2 9.2 V11.8 H5.8 M9.2 11.8 H11.8 V9.2"/>
 </g>
</g>
</svg>

<!-- window borders -->
<div class="a" style="left:0;top:31px;width:1px;height:509px;background:#404040"></div>
<div class="a" style="left:1159px;top:31px;width:1px;height:509px;background:#404040"></div>
<div class="a" style="left:0;top:539px;width:1160px;height:1px;background:#404040"></div>

</body></html>
